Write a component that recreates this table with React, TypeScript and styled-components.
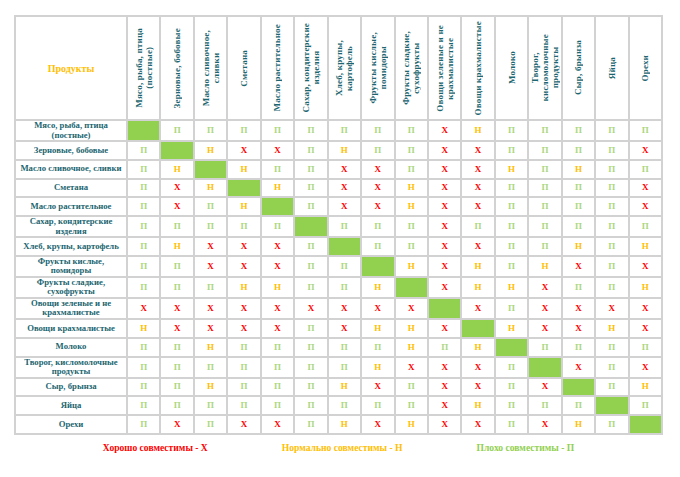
import React from "react";
import styled, { createGlobalStyle } from "styled-components";

type Mark = "G" | "П" | "Н" | "Х";

const GlobalStyle = createGlobalStyle`
  html, body {
    margin: 0;
    padding: 0;
    background: #ffffff;
  }
  body {
    font-family: "Liberation Serif", "Times New Roman", serif;
  }
`;

const headers: string[][] = [
  ["Мясо, рыба, птица", "(постные)"],
  ["Зерновые, бобовые"],
  ["Масло сливочное,", "сливки"],
  ["Сметана"],
  ["Масло растительное"],
  ["Сахар, кондитерские", "изделия"],
  ["Хлеб, крупы,", "картофель"],
  ["Фрукты кислые,", "помидоры"],
  ["Фрукты сладкие,", "сухофрукты"],
  ["Овощи зеленые и не", "крахмалистые"],
  ["Овощи крахмалистые"],
  ["Молоко"],
  ["Творог,", "кисломолочные", "продукты"],
  ["Сыр, брынза"],
  ["Яйца"],
  ["Орехи"],
];

// G marks the diagonal (same product) cell
const rows: { label: string[]; cells: string }[] = [
  { label: ["Мясо, рыба, птица", "(постные)"], cells: "GППППППППХНППППП" },
  { label: ["Зерновые, бобовые"], cells: "ПGНХХПНППХХППППХ" },
  { label: ["Масло сливочное, сливки"], cells: "ПНGНППХХПХХНПНПП" },
  { label: ["Сметана"], cells: "ПХНGНПХХНХХППППХ" },
  { label: ["Масло растительное"], cells: "ПХПНGПХХНХХППППХ" },
  { label: ["Сахар, кондитерские", "изделия"], cells: "ПППППGПППХПППППП" },
  { label: ["Хлеб, крупы, картофель"], cells: "ПНХХХПGППХХППНПН" },
  { label: ["Фрукты кислые,", "помидоры"], cells: "ППХХХППGНХНПНХПХ" },
  { label: ["Фрукты сладкие,", "сухофрукты"], cells: "ПППННППНGХННХППН" },
  { label: ["Овощи зеленые и не", "крахмалистые"], cells: "ХХХХХХХХХGХПХХХХ" },
  { label: ["Овощи крахмалистые"], cells: "НХХХХПХННХGНХХНХ" },
  { label: ["Молоко"], cells: "ППНПППППНПНGПППП" },
  { label: ["Творог, кисломолочные", "продукты"], cells: "ПППППППНХХХПGХПХ" },
  { label: ["Сыр, брынза"], cells: "ППНПППНХПХХПХGПН" },
  { label: ["Яйца"], cells: "ПППППППППХНПППGП" },
  { label: ["Орехи"], cells: "ПХПХХПНХНХХПХНПG" },
];

const markColor: Record<Mark, string> = {
  G: "#92d050",
  П: "#acd780",
  Н: "#ffc000",
  Х: "#ff0000",
};

const Page = styled.div`
  width: 680px;
  height: 477px;
  padding: 15px 17px 0 14px;
  box-sizing: border-box;
`;

const Table = styled.div`
  display: grid;
  grid-template-columns: 110px repeat(16, 1fr);
  grid-template-rows: 102px repeat(16, 1fr);
  gap: 2px;
  padding: 2px;
  width: 649px;
  height: 420px;
  box-sizing: border-box;
  background: #d2d2d2;
`;

const Corner = styled.div`
  background: #ffffff;
  display: flex;
  align-items: center;
  justify-content: center;
  color: #ffc000;
  font-weight: bold;
  font-size: 10px;
`;

const HeadCell = styled.div`
  background: #ffffff;
  display: flex;
  align-items: center;
  justify-content: center;
  overflow: hidden;
`;

const VerticalText = styled.div`
  writing-mode: vertical-rl;
  transform: rotate(180deg);
  text-align: center;
  color: #1c6670;
  font-weight: bold;
  font-size: 9px;
  line-height: 10px;
  letter-spacing: 0.2px;
  white-space: nowrap;
`;

const RowLabel = styled.div`
  background: #ffffff;
  display: flex;
  flex-direction: column;
  align-items: center;
  justify-content: center;
  text-align: center;
  color: #1c6670;
  font-weight: bold;
  font-size: 8.7px;
  line-height: 9.5px;
  white-space: nowrap;
`;

const Cell = styled.div<{ $mark: Mark }>`
  background: ${(p) => (p.$mark === "G" ? "#92d050" : "#ffffff")};
  color: ${(p) => markColor[p.$mark]};
  display: flex;
  align-items: center;
  justify-content: center;
  font-weight: bold;
  font-size: 9px;
  line-height: 1;
`;

const Legend = styled.div`
  display: flex;
  justify-content: center;
  gap: 74px;
  width: 649px;
  margin-top: 7px;
  font-weight: bold;
  font-size: 9.6px;
`;

const LegendItem = styled.span<{ $color: string }>`
  color: ${(p) => p.$color};
`;

function Lines({ lines }: { lines: string[] }) {
  return (
    <>
      {lines.map((l, i) => (
        <React.Fragment key={i}>
          {i > 0 && <br />}
          {l}
        </React.Fragment>
      ))}
    </>
  );
}

export default function App() {
  return (
    <Page>
      <GlobalStyle />
      <Table>
        <Corner>Продукты</Corner>
        {headers.map((h, i) => (
          <HeadCell key={"h" + i}>
            <VerticalText>
              <Lines lines={h} />
            </VerticalText>
          </HeadCell>
        ))}
        {rows.map((r, ri) => (
          <React.Fragment key={"r" + ri}>
            <RowLabel>
              {r.label.map((l, i) => (
                <span key={i}>{l}</span>
              ))}
            </RowLabel>
            {Array.from(r.cells).map((c, ci) => (
              <Cell key={ci} $mark={c as Mark}>
                {c === "G" ? "" : c}
              </Cell>
            ))}
          </React.Fragment>
        ))}
      </Table>
      <Legend>
        <LegendItem $color="#ff0000">Хорошо совместимы - Х</LegendItem>
        <LegendItem $color="#ffc000">Нормально совместимы - Н</LegendItem>
        <LegendItem $color="#92d050">Плохо совместимы - П</LegendItem>
      </Legend>
    </Page>
  );
}
